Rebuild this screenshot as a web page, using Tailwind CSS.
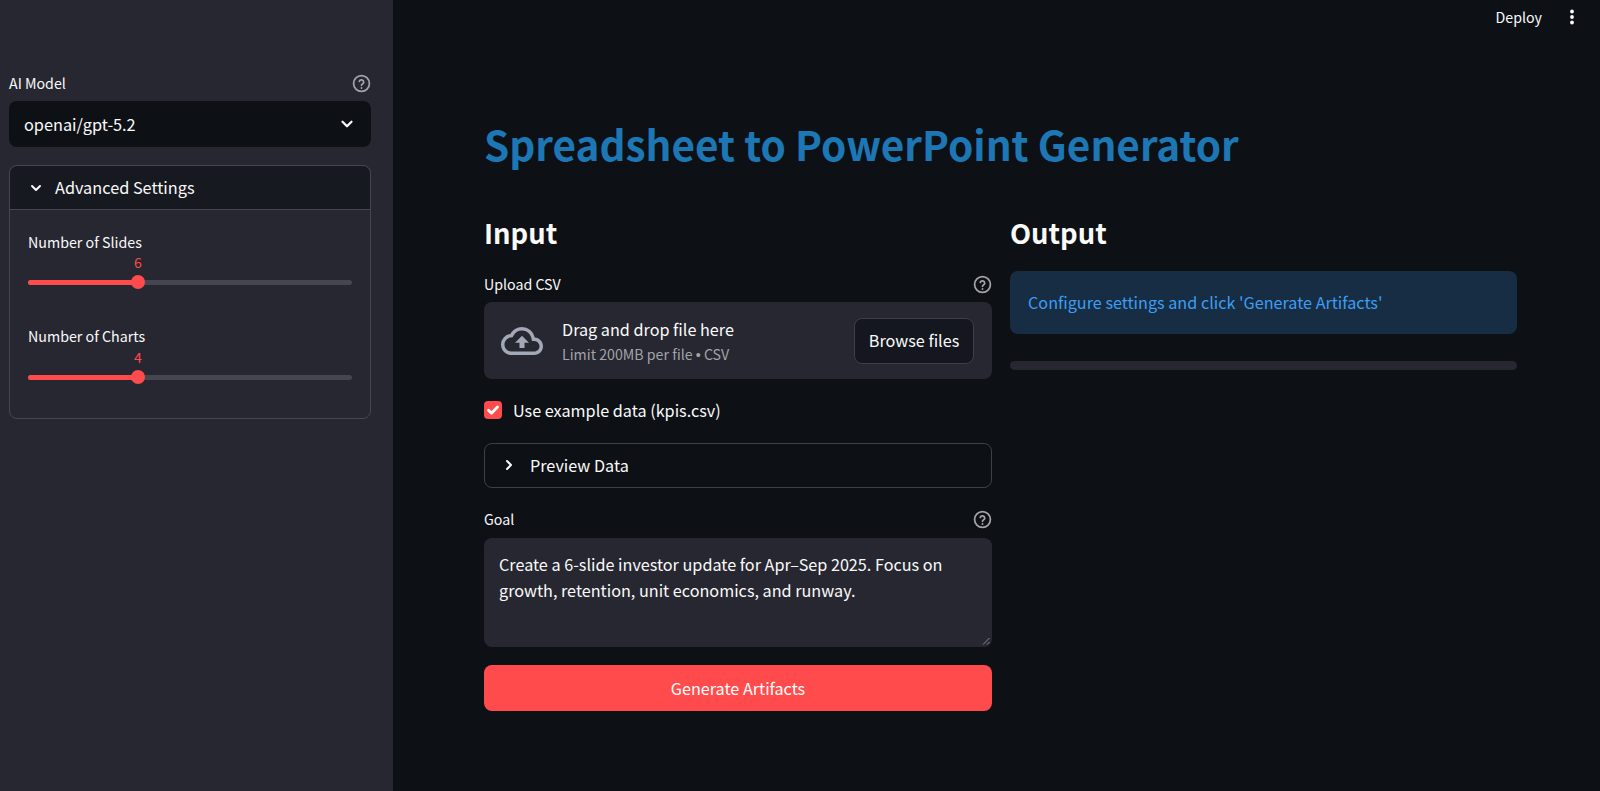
<!DOCTYPE html>
<html lang="en">
<head>
<meta charset="utf-8">
<title>Spreadsheet to PowerPoint Generator</title>
<script src="https://cdn.jsdelivr.net/npm/@tailwindcss/browser@4"></script>
</head>
<body class="m-0 bg-[#0d1116]">
<div class="flex h-[791px] w-[1600px] overflow-hidden bg-[#0d1116] text-[#fafafa] font-['Noto_Sans_CJK_SC','Noto_Sans',sans-serif]">
  <aside class="flex w-[393px] shrink-0 flex-col bg-[#262730] pl-[9px] pr-[22px] pt-[73px]">
    <div class="flex h-[20px] items-center justify-between text-[14.2px] leading-[20px]">
      <span>AI Model</span>
      <svg class="h-[19px] w-[19px] text-[#a3a4a9]" viewBox="0 0 24 24" fill="none" stroke="currentColor" stroke-width="2.2"><circle cx="12" cy="12" r="10"/><path d="M9.2 9.3a2.9 2.9 0 0 1 5.6 1c0 1.9-2.8 2.4-2.8 4" stroke-linecap="round"/><circle cx="12" cy="17.6" r="1.2" fill="currentColor" stroke="none"/></svg>
    </div>
    <div class="mt-[8px] flex h-[46px] items-center justify-between rounded-[8px] bg-[#0d1116] pl-[15px] pr-[15px] text-[16.3px]">
      <span>openai/gpt-5.2</span>
      <svg class="h-[18px] w-[18px]" viewBox="0 0 24 24" fill="none" stroke="currentColor" stroke-width="3"><path d="M6 9l6 6 6-6" stroke-linecap="round" stroke-linejoin="round"/></svg>
    </div>
    <div class="mt-[18px] h-[254px] rounded-[8px] border border-[#45464f]">
      <div class="flex h-[44px] items-center gap-[11px] rounded-t-[8px] border-b border-[#45464f] bg-[#0d1116]/60 pl-[18px] text-[16.3px]">
        <svg class="h-[16px] w-[16px]" viewBox="0 0 24 24" fill="none" stroke="currentColor" stroke-width="3"><path d="M6 9l6 6 6-6" stroke-linecap="round" stroke-linejoin="round"/></svg>
        <span>Advanced Settings</span>
      </div>
      <div class="px-[18px] pt-[22px]">
        <div class="text-[14.25px] leading-[20px]">Number of Slides</div>
        <div class="relative h-[42px]">
          <span class="absolute left-[110px] top-0 flex w-0 justify-center text-[14px] leading-[20px] text-[#ff4b4b]">6</span>
          <div class="absolute left-0 top-[28px] h-[5px] w-[324px] rounded-full bg-[#45464f]"></div>
          <div class="absolute left-0 top-[28px] h-[5px] w-[110px] rounded-full bg-[#ff4b4b]"></div>
          <div class="absolute left-[103px] top-[23px] h-[14px] w-[14px] rounded-full bg-[#ff4b4b]"></div>
        </div>
        <div class="mt-[32px] text-[14.25px] leading-[20px]">Number of Charts</div>
        <div class="relative h-[42px]">
          <span class="absolute left-[110px] top-[1px] flex w-0 justify-center text-[14px] leading-[20px] text-[#ff4b4b]">4</span>
          <div class="absolute left-0 top-[29px] h-[5px] w-[324px] rounded-full bg-[#45464f]"></div>
          <div class="absolute left-0 top-[29px] h-[5px] w-[110px] rounded-full bg-[#ff4b4b]"></div>
          <div class="absolute left-[103px] top-[24px] h-[14px] w-[14px] rounded-full bg-[#ff4b4b]"></div>
        </div>
      </div>
    </div>
  </aside>

  <main class="flex-1 pl-[91px] pr-[83px]">
    <div class="relative h-0">
      <span class="absolute right-[-25px] top-[7px] text-[14.2px] leading-[20px]">Deploy</span>
      <svg class="absolute right-[-64px] top-[8px] h-[18px] w-[18px]" viewBox="0 0 18 18" fill="currentColor"><circle cx="9" cy="3.5" r="1.9"/><circle cx="9" cy="9" r="1.9"/><circle cx="9" cy="14.5" r="1.9"/></svg>
    </div>
    <h1 class="pt-[116px] text-[40.5px] font-bold leading-[56px] text-[#1c77b4]">Spreadsheet to PowerPoint Generator</h1>
    <div class="mt-[41px] grid grid-cols-[508px_507px] gap-[18px]">
      <section>
        <h2 class="text-[27.4px] font-semibold leading-[38px]">Input</h2>
        <div class="mt-[23px] flex h-[20px] items-center justify-between text-[14.2px] leading-[20px]">
          <span>Upload CSV</span>
          <svg class="h-[19px] w-[19px] text-[#a3a4a9]" viewBox="0 0 24 24" fill="none" stroke="currentColor" stroke-width="2.2"><circle cx="12" cy="12" r="10"/><path d="M9.2 9.3a2.9 2.9 0 0 1 5.6 1c0 1.9-2.8 2.4-2.8 4" stroke-linecap="round"/><circle cx="12" cy="17.6" r="1.2" fill="currentColor" stroke="none"/></svg>
        </div>
        <div class="mt-[8px] flex h-[77px] items-center rounded-[8px] bg-[#262730] pl-[17px] pr-[18px]">
          <svg class="h-[42px] w-[42px] shrink-0 text-[#a3a8b8]" viewBox="0 0 24 24"><path fill="currentColor" d="M19.35 10.04A7.49 7.49 0 0 0 12 4C9.11 4 6.6 5.64 5.35 8.04A5.994 5.994 0 0 0 0 14c0 3.31 2.69 6 6 6h13c2.76 0 5-2.24 5-5 0-2.64-2.05-4.78-4.65-4.96zM19 18H6c-2.21 0-4-1.79-4-4 0-2.05 1.53-3.76 3.56-3.97l1.07-.11.5-.95A5.469 5.469 0 0 1 12 6c2.62 0 4.88 1.86 5.39 4.43l.3 1.5 1.53.11A2.98 2.98 0 0 1 22 15c0 1.65-1.35 3-3 3zM8 13h2.55v3h2.9v-3H16l-4-4z"/></svg>
          <div class="ml-[19px] flex-1">
            <div class="text-[16.2px] leading-[24px]">Drag and drop file here</div>
            <div class="mt-[3px] text-[14.2px] leading-[20px] text-[#a3a4a9]">Limit 200MB per file <span class="font-['Liberation_Sans',sans-serif]">•</span> CSV</div>
          </div>
          <div class="flex h-[46px] w-[120px] items-center justify-center rounded-[8px] border border-[#3d3f49] bg-[#14171f] text-[16.2px]">Browse files</div>
        </div>
        <div class="mt-[21px] flex h-[20px] items-center gap-[11px] text-[16.2px] leading-[20px]">
          <span class="flex h-[18px] w-[18px] items-center justify-center rounded-[4px] bg-[#ff4b4b]">
            <svg class="h-[14px] w-[14px]" viewBox="0 0 14 14" fill="none" stroke="white" stroke-width="2.8"><path d="M2.5 7.2l3 3 6-6.2" stroke-linecap="round" stroke-linejoin="round"/></svg>
          </span>
          <span>Use example data (kpis.csv)</span>
        </div>
        <div class="mt-[23px] flex h-[45px] items-center gap-[13px] rounded-[8px] border border-[#3d3f49] pb-[1px] pl-[16px] text-[16.2px]">
          <svg class="h-[16px] w-[16px]" viewBox="0 0 24 24" fill="none" stroke="currentColor" stroke-width="3"><path d="M9 6l6 6-6 6" stroke-linecap="round" stroke-linejoin="round"/></svg>
          <span>Preview Data</span>
        </div>
        <div class="mt-[21px] flex h-[20px] items-center justify-between text-[14.2px] leading-[20px]">
          <span>Goal</span>
          <svg class="h-[19px] w-[19px] text-[#a3a4a9]" viewBox="0 0 24 24" fill="none" stroke="currentColor" stroke-width="2.2"><circle cx="12" cy="12" r="10"/><path d="M9.2 9.3a2.9 2.9 0 0 1 5.6 1c0 1.9-2.8 2.4-2.8 4" stroke-linecap="round"/><circle cx="12" cy="17.6" r="1.2" fill="currentColor" stroke="none"/></svg>
        </div>
        <div class="relative mt-[9px] h-[109px] rounded-[8px] bg-[#262730] px-[15px] pt-[13px] text-[16.2px] leading-[26px]">
          Create a 6-slide investor update for Apr–Sep 2025. Focus on<br>growth, retention, unit economics, and runway.
          <svg class="absolute bottom-[2px] right-[2px] h-[8px] w-[8px] text-[#8b8c93]" viewBox="0 0 8 8" fill="none" stroke="currentColor"><path d="M1 7.5L7.5 1M5 7.5L7.5 5"/></svg>
        </div>
        <div class="mt-[18px] flex h-[46px] items-center justify-center rounded-[8px] bg-[#ff4b4b] text-[16.2px] text-white">Generate Artifacts</div>
      </section>
      <section>
        <h2 class="text-[27.4px] font-semibold leading-[38px]">Output</h2>
        <div class="mt-[20px] flex h-[63px] items-center rounded-[8px] bg-[#172d43] px-[18px] text-[16.2px] text-[#3d9df3]">Configure settings and click 'Generate Artifacts'</div>
        <div class="mt-[27px] h-[9px] rounded-full bg-[#262730]"></div>
      </section>
    </div>
  </main>
</div>
</body>
</html>
